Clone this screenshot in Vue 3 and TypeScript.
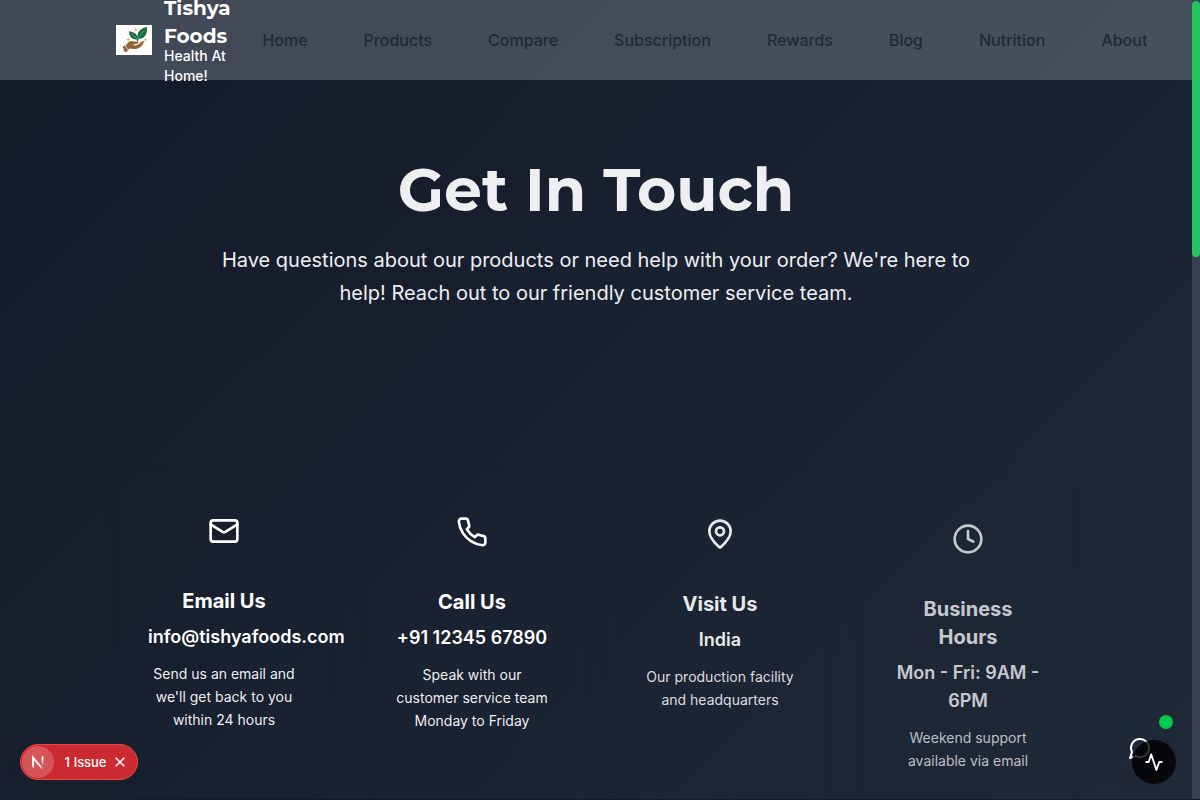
<script setup lang="ts">
interface ContactCard {
  id: string
  title: string[]
  value: string
  lines: string[]
}

const links: string[] = ['Home', 'Products', 'Compare', 'Subscription', 'Rewards', 'Blog', 'Nutrition', 'About']

const cards: ContactCard[] = [
  { id: 'email', title: ['Email Us'], value: 'info@tishyafoods.com', lines: ['Send us an email and', "we'll get back to you", 'within 24 hours'] },
  { id: 'call', title: ['Call Us'], value: '+91 12345 67890', lines: ['Speak with our', 'customer service team', 'Monday to Friday'] },
  { id: 'visit', title: ['Visit Us'], value: 'India', lines: ['Our production facility', 'and headquarters'] },
  { id: 'hours', title: ['Business', 'Hours'], value: 'Mon - Fri: 9AM - 6PM', lines: ['Weekend support', 'available via email'] },
]
</script>

<template>
  <div class="page">
    <header class="navbar">
      <div class="brand">
        <svg class="logo" viewBox="0 0 36 30">
          <rect width="36" height="30" fill="#fff" />
          <path d="M20.6 14.5C15.5 14.8 13 11 13.2 6.3C17.5 6.8 20.6 8.8 21.3 12C21.5 6.5 25 3 30.8 2C31.8 8.5 29 13.8 22.6 13.9L22 16H20.9Z" fill="#146b3b" />
          <path d="M15 8.3L21.2 14L28.3 5.3" fill="none" stroke="#a5d0b4" stroke-width=".5" />
          <path d="M9.5 20.5L12.5 17.2Q15 15.2 18 16.6H22Q23.6 17.6 21.6 18.6L17.5 19.6L18 20.4Q22.5 20.5 25 17Q27.3 15.3 28 16.4Q26.5 21.3 22 23.4Q17.5 24.6 14 23.6L12.2 24.8Z" fill="#976236" />
          <path d="M6.3 22L8.8 20.6L12 25.2L10.3 27.2Q8.5 25.8 7.2 25.4L8 23.8Z" fill="#976236" />
          <path d="M19.8 2.8l.6 1.4 1.4.6-1.4.6-.6 1.4-.6-1.4-1.4-.6 1.4-.6zM12.3 12.3l.7 1.6 1.6.7-1.6.7-.7 1.6-.7-1.6-1.6-.7 1.6-.7zM29.4 12.8l.6 1.4 1.4.6-1.4.6-.6 1.4-.6-1.4-1.4-.6 1.4-.6z" fill="#f3b35c" />
        </svg>
        <div class="brand-text">
          <div class="brand-name">Tishya<br>Foods</div>
          <div class="tagline">Health At<br>Home!</div>
        </div>
      </div>
      <nav class="links">
        <a v-for="link in links" :key="link">{{ link }}</a>
      </nav>
    </header>

    <main>
      <section class="hero">
        <h1>Get In Touch</h1>
        <p>Have questions about our products or need help with your order? We're here to<br>help! Reach out to our friendly customer service team.</p>
      </section>
      <section class="cards">
        <article v-for="card in cards" :key="card.id" class="card" :class="card.id">
          <div class="icon-box">
            <svg class="icon" viewBox="0 0 24 24">
              <template v-if="card.id === 'email'">
                <rect x="2" y="4" width="20" height="16" rx="2" />
                <path d="m22 7-8.97 5.7a1.94 1.94 0 0 1-2.06 0L2 7" />
              </template>
              <path v-else-if="card.id === 'call'" d="M22 16.92v3a2 2 0 0 1-2.18 2 19.79 19.79 0 0 1-8.63-3.07 19.5 19.5 0 0 1-6-6 19.79 19.79 0 0 1-3.07-8.67A2 2 0 0 1 4.11 2h3a2 2 0 0 1 2 1.72 12.84 12.84 0 0 0 .7 2.81 2 2 0 0 1-.45 2.11L8.09 9.91a16 16 0 0 0 6 6l1.27-1.27a2 2 0 0 1 2.11-.45 12.84 12.84 0 0 0 2.81.7A2 2 0 0 1 22 16.92z" />
              <template v-else-if="card.id === 'visit'">
                <path d="M20 10c0 4.993-5.539 10.193-7.399 11.799a1 1 0 0 1-1.202 0C9.539 20.193 4 14.993 4 10a8 8 0 0 1 16 0" />
                <circle cx="12" cy="10" r="3" />
              </template>
              <template v-else>
                <circle cx="12" cy="12" r="10" />
                <path d="M12 6v6l4 2" />
              </template>
            </svg>
          </div>
          <h3><template v-for="(line, i) in card.title" :key="line"><br v-if="i">{{ line }}</template></h3>
          <div class="value">{{ card.value }}</div>
          <p><template v-for="(line, i) in card.lines" :key="line"><br v-if="i">{{ line }}</template></p>
        </article>
      </section>
    </main>

    <div class="issue">
      <span class="mark">
        <svg viewBox="0 0 36 36">
          <defs>
            <linearGradient id="fade" x1="0" y1="0" x2="0" y2="1">
              <stop offset=".35" stop-color="#fff" />
              <stop offset="1" stop-color="#fff" stop-opacity="0" />
            </linearGradient>
            <linearGradient id="stem" x1="0" y1="0" x2="0" y2="1">
              <stop offset=".65" stop-color="#fff" />
              <stop offset="1" stop-color="#fff" stop-opacity=".2" />
            </linearGradient>
          </defs>
          <path d="M13.1 23.7V13.6L22.5 25" fill="none" stroke="url(#stem)" stroke-width="1.9" />
          <rect x="21.7" y="12.3" width="1.6" height="9.5" fill="url(#fade)" />
        </svg>
      </span>
      <span class="issue-label">1 Issue</span>
      <svg class="close" viewBox="0 0 12 12"><path d="M1.7 1.7l8.6 8.6M10.3 1.7L1.7 10.3" /></svg>
    </div>

    <div class="chat">
      <svg viewBox="0 0 24 24"><path d="M7.9 20A9 9 0 1 0 4 16.1L2 22Z" /></svg>
    </div>
    <div class="status-dot"></div>
    <div class="activity">
      <svg viewBox="0 0 24 24"><path d="M1.8 12H5.6L8.6 2.8L14.9 21.4L18.4 12H22.2" /></svg>
    </div>
    <div class="scroll-track"><div class="scroll-thumb"></div></div>
  </div>
</template>

<style>
body { margin: 0; overflow: hidden; background: #111827; }
</style>

<style scoped>
* { box-sizing: border-box; }
.page {
  position: relative;
  width: 1200px;
  height: 800px;
  overflow: hidden;
  font-family: Inter, sans-serif;
  color: #fff;
  border-bottom: 1px solid #141b28;
  background: linear-gradient(135deg, #131827 0%, #18212f 45%, #1f2937 100%);
}
.navbar {
  height: 80px;
  display: flex;
  align-items: center;
  padding-left: 116px;
  background: rgba(238, 244, 255, .21);
}
.brand { display: flex; align-items: center; gap: 12px; width: 146.4px; }
.logo { width: 36px; height: 30px; flex: none; }
.brand-name {
  font: 700 20px/28px Montserrat, Inter, sans-serif;
  white-space: nowrap;
}
.tagline { margin-top: -4px; font-size: 14px; line-height: 20px; font-weight: 500; white-space: nowrap; }
.links { display: flex; gap: 56px; font-size: 16px; line-height: 24px; font-weight: 500; color: #1f2937; white-space: nowrap; }
.hero { height: 387px; padding-top: 80px; width: 1192px; text-align: center; }
h1 {
  margin: 0;
  font: 700 60px/60px Montserrat, Inter, sans-serif;
  color: #eeeff1;
}
.hero p { margin: 24px 0 0; font-size: 20px; line-height: 32.5px; color: #eeeff1; }
.cards { display: grid; grid-template-columns: repeat(4, 216px); gap: 32px; padding-left: 116px; align-items: start; }
.card {
  height: 329px;
  padding: 32px;
  text-align: center;
  border-radius: 24px;
  box-shadow: 0 4px 12px rgba(0, 0, 0, .02);
}
.call { transform: translateY(1px); }
.visit { transform: translateY(3px); opacity: .9; }
.hours { transform: translateY(8px); opacity: .75; }
.icon-box { height: 64px; display: flex; align-items: center; justify-content: center; }
.icon { width: 32px; height: 32px; }
.icon, .chat svg, .activity svg { fill: none; stroke: #fff; stroke-width: 2; stroke-linecap: round; stroke-linejoin: round; }
h3 { margin: 24px 0 8px; font-size: 20px; line-height: 28px; font-weight: 700; }
.value { font-size: 18px; line-height: 28px; font-weight: 600; }
.card p { margin: 12px 0 0; font-size: 14px; line-height: 22.75px; color: rgba(255, 255, 255, .95); white-space: nowrap; }
.issue {
  position: absolute;
  left: 20px;
  top: 744px;
  width: 118px;
  height: 36px;
  display: flex;
  align-items: center;
  border: 1px solid #e5484d;
  border-radius: 18px;
  background: #ca2a30;
  padding-left: 1px;
  box-shadow: 0 8px 16px rgba(0, 0, 0, .06);
}
.mark { width: 32px; height: 32px; border-radius: 50%; background: #d75559; }
.mark svg { display: block; width: 36px; height: 36px; margin: -2px; }
.issue-label { margin-left: 10.5px; font-size: 13px; font-weight: 500; white-space: nowrap; letter-spacing: -.1px; word-spacing: .6px; }
.close { width: 12px; height: 12px; position: absolute; right: 11px; fill: none; stroke: #fff; stroke-width: 1.5; }
.chat {
  position: absolute;
  left: 1112px;
  top: 720px;
  width: 56px;
  height: 56px;
  display: flex;
  align-items: center;
  justify-content: center;
  border-radius: 50%;
  background: rgba(30, 43, 60, .4);
  box-shadow: 0 8px 16px rgba(0, 0, 0, .04);
}
.chat svg { width: 24px; height: 24px; }
.status-dot { position: absolute; left: 1159px; top: 715px; width: 14px; height: 14px; border-radius: 50%; background: #00c950; }
.activity {
  position: absolute;
  left: 1132px;
  top: 740px;
  width: 44px;
  height: 44px;
  display: flex;
  align-items: center;
  justify-content: center;
  border-radius: 50%;
  background: rgba(0, 0, 0, .8);
}
.activity svg { width: 20px; height: 20px; stroke-width: 2.2; stroke-linecap: butt; stroke-linejoin: round; }
.scroll-track { position: absolute; right: 0; top: 0; width: 8px; height: 800px; background: #374151; }
.scroll-thumb { margin-top: 1px; height: 256px; border-radius: 4px; background: #22c55e; }
</style>
